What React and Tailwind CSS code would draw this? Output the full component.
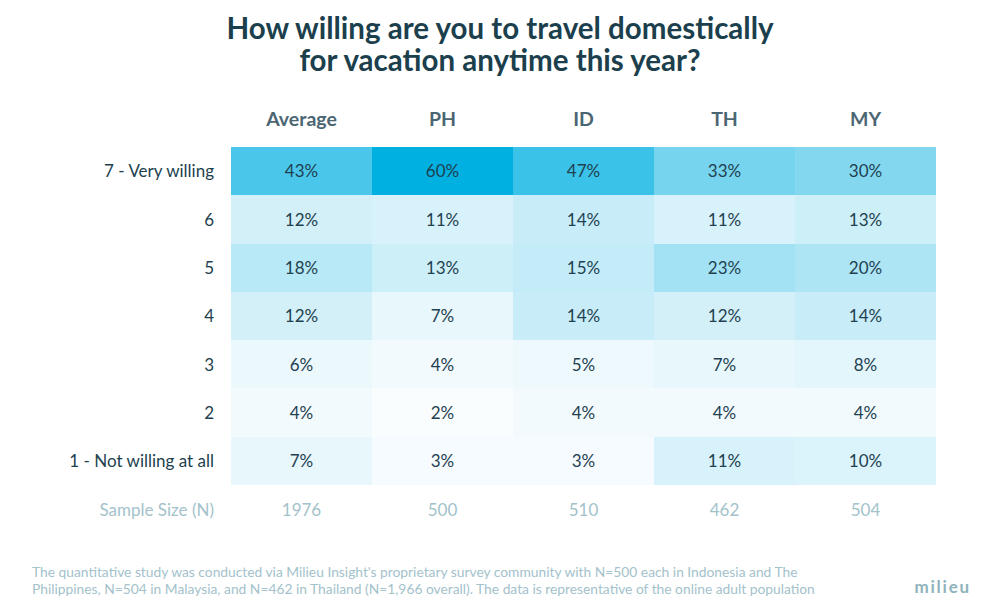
const columns = ['Average', 'PH', 'ID', 'TH', 'MY'];

const rows = [
  { label: '7 - Very willing', values: [43, 60, 47, 33, 30] },
  { label: '6', values: [12, 11, 14, 11, 13] },
  { label: '5', values: [18, 13, 15, 23, 20] },
  { label: '4', values: [12, 7, 14, 12, 14] },
  { label: '3', values: [6, 4, 5, 7, 8] },
  { label: '2', values: [4, 2, 4, 4, 4] },
  { label: '1 - Not willing at all', values: [7, 3, 3, 11, 10] },
];

const sampleSizes = ['1976', '500', '510', '462', '504'];

// heat scale, white -> milieu blue
const shade = {
  60: 'bg-[#00b0e1]',
  47: 'bg-[#3ac2e8]',
  43: 'bg-[#4ac6ea]',
  33: 'bg-[#76d4ee]',
  30: 'bg-[#83d8f0]',
  23: 'bg-[#a2e2f4]',
  20: 'bg-[#ade5f5]',
  18: 'bg-[#b8e9f6]',
  15: 'bg-[#c3ecf8]',
  14: 'bg-[#c8edf8]',
  13: 'bg-[#cdeff8]',
  12: 'bg-[#d3f0f9]',
  11: 'bg-[#d7f2fa]',
  10: 'bg-[#dbf3fa]',
  8: 'bg-[#e3f6fb]',
  7: 'bg-[#e7f7fc]',
  6: 'bg-[#ebf8fc]',
  5: 'bg-[#eef9fd]',
  4: 'bg-[#f2fafd]',
  3: 'bg-[#f5fbfe]',
  2: 'bg-[#fafdfe]',
};

export default function App() {
  return (
    <div className="w-[1000px] h-[600px] bg-white overflow-hidden font-['Lato','Noto_Sans',sans-serif]">
      {/* Title */}
      <h1 className="pt-[12px] text-center text-[29.5px] leading-[32px] font-bold text-[#1c3f4d]">
        How willing are you to travel domestically
        <br />
        for vacation anytime this year?
      </h1>

      {/* Table */}
      <div className="mt-[19px] grid grid-cols-[231px_repeat(5,141px)]">
        <div className="h-[48px]" />
        {columns.map((c) => (
          <div
            key={c}
            className="h-[48px] flex items-center justify-center text-[19.5px] font-bold text-[#4b6672]"
          >
            {c}
          </div>
        ))}
        <div className="col-span-6 h-[4px]" />

        {rows.map((r) => (
          <div key={r.label} className="contents">
            <div className="h-[48.3px] flex items-center justify-end pr-[17px] text-[17px] text-[#1d3f4e]">
              {r.label}
            </div>
            {r.values.map((v, i) => (
              <div
                key={i}
                className={`h-[48.3px] flex items-center justify-center text-[17px] text-[#1f4150] ${shade[v]}`}
              >
                {v}%
              </div>
            ))}
          </div>
        ))}

        <div className="h-[50px] flex items-center justify-end pr-[17px] text-[17px] text-[#a3c2cb]">
          Sample Size (N)
        </div>
        {sampleSizes.map((n, i) => (
          <div
            key={i}
            className="h-[50px] flex items-center justify-center text-[17px] text-[#a3c2cb]"
          >
            {n}
          </div>
        ))}
      </div>

      {/* Footer */}
      <div className="mt-[28px] pl-[32px] pr-[29px] flex items-end justify-between">
        <p className="text-[13.8px] leading-[17px] text-[#a3c2cb] whitespace-nowrap">
          The quantitative study was conducted via Milieu Insight's proprietary survey community with N=500 each in Indonesia and The
          <br />
          Philippines, N=504 in Malaysia, and N=462 in Thailand (N=1,966 overall). The data is representative of the online adult population
        </p>
        <span className="mb-[1px] text-[17px] leading-[18px] font-bold tracking-[1.8px] text-[#8fb3bd]">milieu</span>
      </div>
    </div>
  );
}
